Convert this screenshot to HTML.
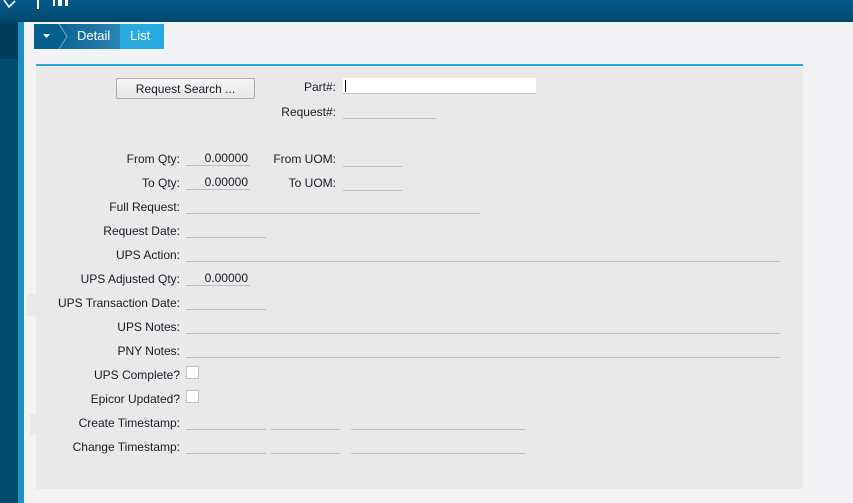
<!DOCTYPE html>
<html><head><style>
*{margin:0;padding:0;box-sizing:border-box}
body{width:853px;height:503px;overflow:hidden;background:#f3f3f5;font-family:"Liberation Sans",sans-serif;font-size:12px;color:#1a1a2a;position:relative}
.a{position:absolute}
.l{position:absolute;text-align:right;width:170px;line-height:14px;margin-top:1px}
.f{position:absolute;height:1px;background:#bfbfbf}
.v{position:absolute;line-height:14px;text-align:right;margin-top:1px}
.cb{position:absolute;width:13px;height:13px;background:#fff;border:1px solid #c4c4c4}
</style></head><body>
<div class="a" style="left:0;top:0;width:853px;height:22px;background:linear-gradient(#04598a,#024a6e)"></div>
<svg class="a" style="left:2px;top:0" width="20" height="10"><path d="M2 0 L7 7 L13 1" stroke="#fff" stroke-width="1.6" fill="none"/></svg>
<div class="a" style="left:37px;top:0;width:2px;height:9px;background:#fff"></div>
<div class="a" style="left:53px;top:0;width:15px;height:6px;background:#fff"></div>
<div class="a" style="left:55px;top:0;width:3px;height:6px;background:#0a5a86"></div>
<div class="a" style="left:62px;top:0;width:3px;height:6px;background:#0a5a86"></div>
<div class="a" style="left:0;top:22px;width:18px;height:481px;background:#004a6e"></div>
<div class="a" style="left:0;top:22px;width:18px;height:37px;background:#003d5c"></div>
<div class="a" style="left:18px;top:22px;width:6px;height:481px;background:#2190c0"></div>
<div class="a" style="left:34px;top:24px;width:86px;height:25px;background:#055e8c"></div>
<div class="a" style="left:60px;top:24px;width:60px;height:25px;background:linear-gradient(90deg,#0c6494,#2a84b4)"></div>
<svg class="a" style="left:34px;top:24px" width="86" height="25"><path d="M25 0 L33 12.5 L25 25 L0 25 L0 0Z" fill="#055e8c"/><path d="M25 0 L33 12.5 L25 25" stroke="#6aa8cc" fill="none"/><path d="M9 10 L16 10 L12.5 14Z" fill="#fff"/></svg>
<div class="a" style="left:77px;top:28px;color:#fff;font-size:13px">Detail</div>
<div class="a" style="left:120px;top:24px;width:44px;height:25px;background:#29abe2;color:#fff;font-size:13px;padding:4px 0 0 10px">List</div>
<div class="a" style="left:36px;top:64px;width:767px;height:425px;background:#e9e9e9;border-top:2px solid #29a8e0"></div>
<div class="a" style="left:27px;top:294px;width:10px;height:22px;background:#e9e9e9"></div>
<div class="a" style="left:30px;top:414px;width:7px;height:21px;background:#e9e9e9"></div>
<div class="a" style="left:116px;top:78px;width:139px;height:21px;background:linear-gradient(#f6f6f6,#e6e6e6);border:1px solid #adadad;border-radius:2px;text-align:center;line-height:20px">Request Search ...</div>
<div class="l" style="left:166px;top:79px">Part#:</div>
<div class="a" style="left:343px;top:78px;width:193px;height:16px;background:#fff;border-bottom:1px solid #bfbfbf"></div>
<div class="a" style="left:345px;top:80px;width:1px;height:12px;background:#000"></div>
<div class="l" style="left:166px;top:104px">Request#:</div><div class="f" style="left:343px;top:118px;width:93px"></div>

<div class="l" style="left:10px;top:151px">From Qty:</div><div class="f" style="left:186px;top:165px;width:64px"></div><div class="v" style="left:186px;top:150px;width:62px">0.00000</div>
<div class="l" style="left:166px;top:151px">From UOM:</div><div class="f" style="left:343px;top:166px;width:59px"></div>
<div class="l" style="left:10px;top:175px">To Qty:</div><div class="f" style="left:186px;top:189px;width:64px"></div><div class="v" style="left:186px;top:174px;width:62px">0.00000</div>
<div class="l" style="left:166px;top:175px">To UOM:</div><div class="f" style="left:343px;top:190px;width:59px"></div>
<div class="l" style="left:10px;top:199px">Full Request:</div><div class="f" style="left:186px;top:213px;width:294px"></div>
<div class="l" style="left:10px;top:223px">Request Date:</div><div class="f" style="left:186px;top:237px;width:80px"></div>
<div class="l" style="left:10px;top:247px">UPS Action:</div><div class="f" style="left:186px;top:261px;width:594px"></div>
<div class="l" style="left:10px;top:271px">UPS Adjusted Qty:</div><div class="f" style="left:186px;top:285px;width:64px"></div><div class="v" style="left:186px;top:270px;width:62px">0.00000</div>
<div class="l" style="left:10px;top:295px">UPS Transaction Date:</div><div class="f" style="left:186px;top:309px;width:80px"></div>
<div class="l" style="left:10px;top:319px">UPS Notes:</div><div class="f" style="left:186px;top:333px;width:594px"></div>
<div class="l" style="left:10px;top:343px">PNY Notes:</div><div class="f" style="left:186px;top:357px;width:594px"></div>
<div class="l" style="left:10px;top:367px">UPS Complete?</div><div class="cb" style="left:186px;top:366px"></div>
<div class="l" style="left:10px;top:391px">Epicor Updated?</div><div class="cb" style="left:186px;top:390px"></div>
<div class="l" style="left:10px;top:415px">Create Timestamp:</div><div class="f" style="left:186px;top:429px;width:80px"></div><div class="f" style="left:271px;top:429px;width:69px"></div><div class="f" style="left:351px;top:429px;width:174px"></div>
<div class="l" style="left:10px;top:439px">Change Timestamp:</div><div class="f" style="left:186px;top:453px;width:80px"></div><div class="f" style="left:271px;top:453px;width:69px"></div><div class="f" style="left:351px;top:453px;width:174px"></div>
</body></html>
